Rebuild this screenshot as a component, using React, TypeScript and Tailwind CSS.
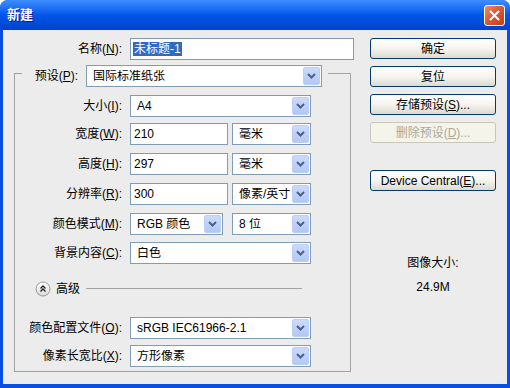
import React from "react";

const font = "font-['Liberation_Sans','Noto_Sans_CJK_SC',sans-serif]";

function Chevron() {
  return (
    <svg width="9" height="6" viewBox="0 0 9 6">
      <path d="M1 1 L4.5 4.5 L8 1" fill="none" stroke="#4D6185" strokeWidth="2" />
    </svg>
  );
}

function Combo({ value, className }: { value: string; className: string }) {
  return (
    <div className={`flex h-[22px] items-center border border-[#7F9DB9] bg-white ${className}`}>
      <span className="flex-1 truncate pl-[6px] leading-none">{value}</span>
      <span className="mr-px flex h-[18px] w-[17px] items-center justify-center rounded-[2px] border border-[#BCCDF7] bg-gradient-to-b from-[#CBDAFC] to-[#B3C8F5]">
        <Chevron />
      </span>
    </div>
  );
}

function Field({ value, className }: { value: string; className: string }) {
  return (
    <div className={`flex h-[22px] items-center border border-[#7F9DB9] bg-white pl-[3px] ${className}`}>
      {value}
    </div>
  );
}

function Row({ label, children, className = "" }: { label: React.ReactNode; children: React.ReactNode; className?: string }) {
  return (
    <div className={`flex items-center ${className}`}>
      <div className="w-[111px] whitespace-nowrap pr-[4px] text-right">{label}</div>
      <div className="ml-[4px] flex gap-[4px]">{children}</div>
    </div>
  );
}

function Btn({ children, disabled = false }: { children: React.ReactNode; disabled?: boolean }) {
  return disabled ? (
    <div className="flex h-[21px] w-[126px] items-center justify-center rounded-[3px] border border-[#C9C7BA] bg-[#F5F4EA] text-[#ACA899]">
      {children}
    </div>
  ) : (
    <div className="flex h-[21px] w-[126px] items-center justify-center rounded-[3px] border border-[#003C74] bg-gradient-to-b from-white via-[#F5F4EF] to-[#DCDAD0] text-black">
      {children}
    </div>
  );
}

export default function App() {
  return (
    <div className={`flex h-[388px] w-[510px] flex-col overflow-hidden rounded-t-[8px] bg-[#0A4FDF] text-[12px] text-black ${font}`}>
      {/* title bar */}
      <div className="flex h-[30px] shrink-0 items-center justify-between bg-gradient-to-b from-[#3D8EFF] via-[#0056E8] to-[#0043CF] pl-[7px] pr-[5px]">
        <span className="text-[13px] font-bold text-white [text-shadow:1px_1px_#0A1A8A]">新建</span>
        <div className="flex h-[21px] w-[21px] items-center justify-center rounded-[3px] border border-white bg-gradient-to-br from-[#F08A68] via-[#DB5530] to-[#C2401A]">
          <svg width="11" height="11" viewBox="0 0 11 11">
            <path d="M1.5 1.5 L9.5 9.5 M9.5 1.5 L1.5 9.5" stroke="white" strokeWidth="2" strokeLinecap="round" />
          </svg>
        </div>
      </div>

      {/* client */}
      <div className="mx-[3px] mb-[4px] flex flex-1 bg-[#ECECEC] pt-[8px]">
        <div className="w-[367px] shrink-0">
          <div className="flex items-center">
            <div className="w-[123px] whitespace-nowrap pr-[4px] text-right">
              名称(<u>N</u>):
            </div>
            <div className="ml-[4px] flex h-[22px] w-[224px] items-center border border-[#7F9DB9] bg-white pl-[2px]">
              <span className="bg-[#316AC5] px-px leading-[14px] text-white">未标题-1</span>
            </div>
          </div>

          {/* group box */}
          <div className="ml-[11px] mt-[13px] h-[299px] w-[337px] border border-[#A2A2A2]">
            <div className="-mt-[9px] ml-[7px] flex w-[306px] items-center bg-[#ECECEC]">
              <div className="w-[60px] whitespace-nowrap pr-[4px] text-right">
                预设(<u>P</u>):
              </div>
              <Combo value="国际标准纸张" className="ml-[4px] w-[236px]" />
            </div>

            <Row label={<>大小(<u>I</u>):</>} className="mt-[8px]">
              <Combo value="A4" className="w-[181px]" />
            </Row>
            <Row label={<>宽度(<u>W</u>):</>} className="mt-[6px]">
              <Field value="210" className="w-[98px]" />
              <Combo value="毫米" className="w-[79px]" />
            </Row>
            <Row label={<>高度(<u>H</u>):</>} className="mt-[8px]">
              <Field value="297" className="w-[98px]" />
              <Combo value="毫米" className="w-[79px]" />
            </Row>
            <Row label={<>分辨率(<u>R</u>):</>} className="mt-[8px]">
              <Field value="300" className="w-[98px]" />
              <Combo value="像素/英寸" className="w-[79px]" />
            </Row>
            <Row label={<>颜色模式(<u>M</u>):</>} className="mt-[8px]">
              <Combo value="RGB 颜色" className="w-[93px]" />
              <Combo value="8 位" className="ml-[5px] w-[79px]" />
            </Row>
            <Row label={<>背景内容(<u>C</u>):</>} className="mt-[7px]">
              <Combo value="白色" className="w-[181px]" />
            </Row>

            <div className="ml-[20px] mt-[17px] flex h-[16px] items-center">
              <svg width="16" height="16" viewBox="0 0 16 16">
                <defs>
                  <linearGradient id="adv" x1="0" y1="0" x2="0" y2="1">
                    <stop offset="0" stopColor="#FFFFFF" />
                    <stop offset="1" stopColor="#D8D8D8" />
                  </linearGradient>
                </defs>
                <circle cx="8" cy="8" r="7" fill="url(#adv)" stroke="#9A9A9A" />
                <path d="M5.5 7.5 L8 5 L10.5 7.5 M5.5 10.5 L8 8 L10.5 10.5" fill="none" stroke="#222" strokeWidth="1.3" />
              </svg>
              <span className="ml-[5px]">高级</span>
              <div className="ml-[6px] h-[2px] w-[216px] border-t border-[#A2A2A2] border-b-white" />
            </div>

            <Row label={<>颜色配置文件(<u>O</u>):</>} className="mt-[20px]">
              <Combo value="sRGB IEC61966-2.1" className="w-[181px]" />
            </Row>
            <Row label={<>像素长宽比(<u>X</u>):</>} className="mt-[6px]">
              <Combo value="方形像素" className="w-[181px]" />
            </Row>
          </div>
        </div>

        {/* right column */}
        <div className="flex w-[126px] flex-col">
          <div className="flex flex-col gap-[7px]">
            <Btn>确定</Btn>
            <Btn>复位</Btn>
            <Btn>
              存储预设(<u>S</u>)...
            </Btn>
            <Btn disabled>
              删除预设(<u>D</u>)...
            </Btn>
          </div>
          <div className="mt-[27px]">
            <Btn>
              Device Central(<u>E</u>)...
            </Btn>
          </div>
          <div className="mt-[65px] text-center leading-[14px]">图像大小:</div>
          <div className="mt-[10px] text-center leading-[14px]">24.9M</div>
        </div>
      </div>
    </div>
  );
}
